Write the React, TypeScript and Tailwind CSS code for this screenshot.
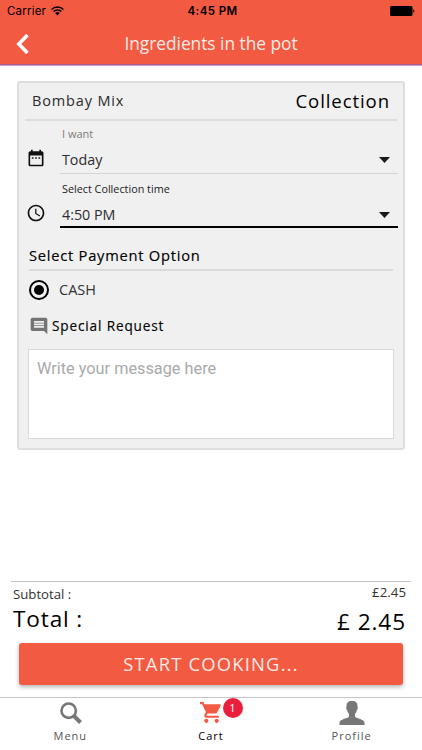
import React from 'react';
import { MdAccessTime, MdComment, MdDateRange, MdShoppingCart } from 'react-icons/md';

interface SelectFieldProps {
    label: string;
    value: string;
    icon: React.ReactNode;
    active?: boolean;
}

const StatusBar: React.FC = () => (
    <div className="h-[22px] px-[7px] flex items-center justify-between text-black font-['Inter',sans-serif]">
        <div className="flex-1 flex items-center gap-[5px] text-[11.5px] tracking-[0.2px]">
            <span className="pt-px">Carrier</span>
            <svg width="13" height="10" viewBox="0 0 13 10" fill="none" stroke="currentColor" strokeWidth="1.5">
                <path d="M0.6 3.5a8.5 8.5 0 0 1 11.8 0M2.6 5.5a5.6 5.6 0 0 1 7.8 0" />
                <path d="M6.5 9.5 4.2 7.1a3.4 3.4 0 0 1 4.6 0z" fill="currentColor" stroke="none" />
            </svg>
        </div>
        <span className="pt-px pl-[3px] text-[11.5px] font-semibold tracking-[0.4px]">4:45 PM</span>
        <div className="flex-1 flex justify-end">
            <svg width="25" height="10" viewBox="0 0 25 10" fill="currentColor">
                <rect width="22.5" height="10" rx="1.5" />
                <path d="M23.3 3.2a2 2 0 0 1 0 3.6z" />
            </svg>
        </div>
    </div>
);

const SelectField: React.FC<SelectFieldProps> = ({ label, value, icon, active }) => (
    <div className={`flex ${active ? 'h-[50px]' : 'h-[51px]'}`}>
        <div className="w-[35px] pt-[25px] pl-px text-[#111]">{icon}</div>
        <div className={`flex-1 pl-[2px] ${active ? 'border-b-2 border-black' : 'border-b border-[#d4d4d4]'}`}>
            <div className={`h-[22px] leading-[22px] ${active ? 'text-[10.8px] text-[#222]' : 'text-[11px] text-[#7c7c7c]'}`}>{label}</div>
            <div className="h-[30px] flex items-center justify-between pr-[8px] text-[14.3px] text-[#2d2d2d]">
                <span>{value}</span>
                <svg width="11" height="6" viewBox="0 0 11 6" fill="#1a1a1a">
                    <path d="M0 0h11L5.5 6z" />
                </svg>
            </div>
        </div>
    </div>
);

const OrderCard: React.FC = () => (
    <section className="mx-[17px] mt-[15px] h-[369px] bg-[#f0f0f0] border-2 border-[#dedede] rounded-[3px] flex flex-col">
        <div className="mx-[6px] h-[38px] px-[7px] flex items-center justify-between border-b-2 border-[#dcdcdc]">
            <span className="text-[14.5px] tracking-[0.85px] text-[#2b2b2b]">Bombay Mix</span>
            <span className="text-[18.6px] tracking-[0.9px] text-black">Collection</span>
        </div>
        <div className="pt-[2px] pl-[6px] pr-[5px] flex flex-col gap-[4px]">
            <SelectField label="I want" value="Today" icon={<MdDateRange size={20} />} />
            <SelectField label="Select Collection time" value="4:50 PM" icon={<MdAccessTime size={20} />} active />
        </div>
        <div className="mx-[10px] h-[43px] pt-[13px] border-b-2 border-[#dadada] text-[14.7px] leading-[28px] tracking-[0.75px] text-black [-webkit-text-stroke:0.15px_black]">
            Select Payment Option
        </div>
        <div className="ml-[10px] h-[38px] flex items-center gap-[10px] text-[14.5px] text-[#333]">
            <span className="size-[20px] rounded-full border-2 border-black flex items-center justify-center">
                <span className="size-[10px] rounded-full bg-black" />
            </span>
            CASH
        </div>
        <div className="ml-[10px] h-[34px] flex items-center gap-[3px] text-[13.6px] tracking-[0.85px] text-black [-webkit-text-stroke:0.15px_black]">
            <MdComment size={20} className="text-[#747474]" />
            Special Request
        </div>
        <textarea
            placeholder="Write your message here"
            className="mx-[9px] mt-[6px] h-[90px] shrink-0 resize-none bg-white border border-[#d9d9d9] px-[8px] py-[7px] font-['Roboto',sans-serif] text-[16.3px] outline-none placeholder:text-[#aaa]"
        />
    </section>
);

const Totals: React.FC = () => (
    <div className="mx-[11px] h-[62px] border-t border-[#c4c4c4] flex justify-between">
        <div className="pl-[2px] pt-[3px]">
            <div className="text-[13.2px] leading-[18px] text-[#333]">Subtotal :</div>
            <div className="text-[22.6px] leading-[31px] tracking-[0.85px] text-black">Total :</div>
        </div>
        <div className="pr-[5px] pt-px text-right">
            <div className="text-[13.3px] leading-[18px] text-[#333]">£2.45</div>
            <div className="pt-[5px] text-[22.6px] leading-[32px] tracking-[0.9px] text-black">£ 2.45</div>
        </div>
    </div>
);

const TabBar: React.FC = () => (
    <nav className="h-[53px] border-t border-[#c6c6c6] flex text-[11px] tracking-[1px] text-[#555]">
        <div className="flex-1 pt-[4px] flex flex-col items-center">
            <svg className="ml-px" width="22" height="22" viewBox="0 0 22 22" fill="none" stroke="#777">
                <circle cx="8.7" cy="8.7" r="7.2" strokeWidth="2.6" />
                <path d="m14 14 6.5 6.5" strokeWidth="4" />
            </svg>
            <span className="mt-[3px] leading-[18px]">Menu</span>
        </div>
        <div className="flex-1 pt-[2px] flex flex-col items-center text-black">
            <div className="relative">
                <MdShoppingCart size={25} className="text-[#f25a41]" />
                <span className="absolute left-[24px] top-[-2px] size-[20px] rounded-full bg-[#eb1f3c] text-white text-[11px] leading-[20px] tracking-normal text-center">
                    1
                </span>
            </div>
            <span className="mt-[2px] leading-[18px]">Cart</span>
        </div>
        <div className="flex-1 pt-[3px] flex flex-col items-center">
            <svg width="26" height="24" viewBox="0 0 26 24" fill="#777">
                <path d="M13 0C9 0 7.3 2 7.6 5.4c-.8.6-.4 3 .6 3.8.4 1.8 1 2.8 1.8 3.7v2.6C9.2 17.3 1.4 18.1.6 21L.4 24h25.2l-.2-3c-.8-2.9-8.6-3.7-9.4-5.5v-2.6c.8-.9 1.4-1.9 1.8-3.7 1-.8 1.4-3.2.6-3.8C18.7 2 17 0 13 0z" />
            </svg>
            <span className="mt-[2px] leading-[18px]">Profile</span>
        </div>
    </nav>
);

const App: React.FC = () => {
    return (
        <div className="w-[422px] h-[750px] bg-white flex flex-col overflow-hidden font-['Open_Sans','Noto_Sans',sans-serif]">
            <header className="h-[66px] bg-[#f25a41] border-b border-[#d9a0cf] shadow-[inset_0_-1px_0_#a0618f]">
                <StatusBar />
                <div className="h-[43px] px-[16px] flex items-center text-white">
                    <svg width="14" height="20" viewBox="0 0 14 20" fill="none" stroke="currentColor" strokeWidth="3.6">
                        <path d="M11.5 1 2.8 10l8.7 9" />
                    </svg>
                    <h1 className="flex-1 pr-[14px] text-center text-[17.3px] text-[#ffeae6]">Ingredients in the pot</h1>
                </div>
            </header>
            <OrderCard />
            <div className="mt-auto">
                <Totals />
                <button className="mx-[19px] mb-[12px] w-[384px] h-[42px] block rounded-[3px] bg-[#f25a41] text-[#ffeae6] text-[18.4px] tracking-[1.2px] shadow-[0_2px_4px_rgba(0,0,0,0.3)]">
                    START COOKING...
                </button>
                <TabBar />
            </div>
        </div>
    );
};

export default App;
